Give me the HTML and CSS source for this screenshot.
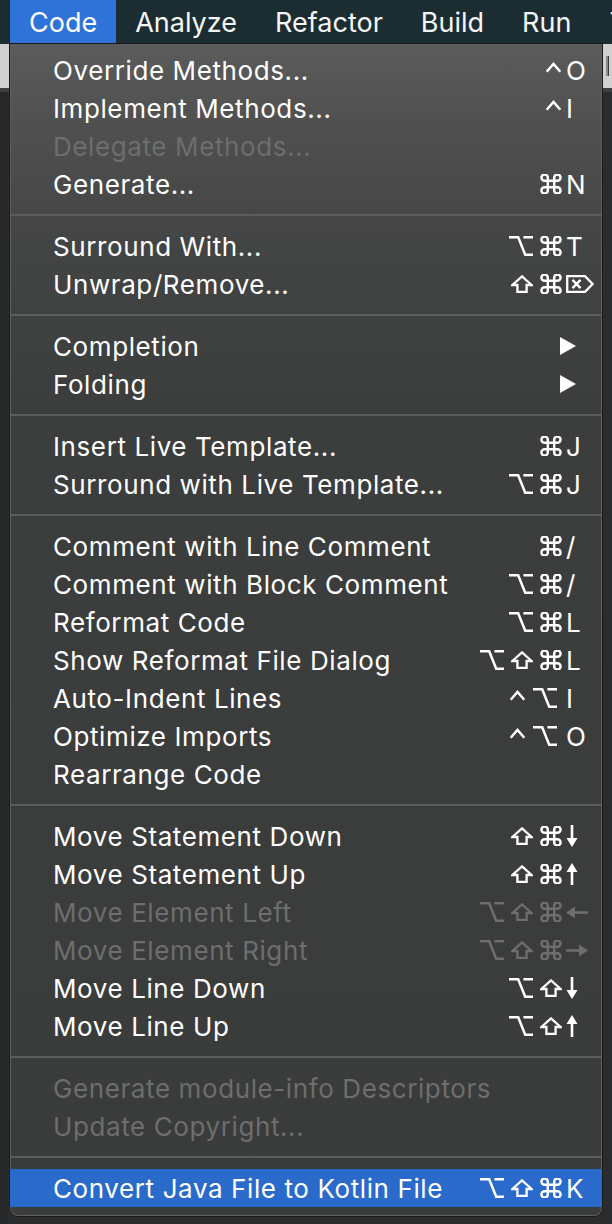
FILE: index.html
```html
<!DOCTYPE html>
<html>
<head>
<meta charset="utf-8">
<link rel="stylesheet" href="styles.css">
</head>
<body>
<svg class="defs" width="0" height="0" aria-hidden="true">
  <defs>
    <symbol id="cmd" viewBox="2.6 2.6 18.8 18.8"><path d="M15 6v12a3 3 0 1 0 3-3H6a3 3 0 1 0 3 3V6a3 3 0 1 0-3 3h12a3 3 0 1 0-3-3" fill="none" stroke="currentColor" stroke-width="2.3"/></symbol>
    <symbol id="opt" viewBox="0 0 24 20"><path d="M0 1.3H9.2L16.2 18.7H24M14.4 1.3H24" fill="none" stroke="currentColor" stroke-width="2.5"/></symbol>
    <symbol id="shift" viewBox="0 0 22 18"><path d="M11 1.4L20.6 10H15.6V16.8H6.4V10H1.4Z" fill="none" stroke="currentColor" stroke-width="2.3" stroke-linejoin="miter"/></symbol>
    <symbol id="ctrl" viewBox="0 0 16 20"><path d="M1.2 11.8L8 4L14.8 11.8" fill="none" stroke="currentColor" stroke-width="2.5"/></symbol>
    <symbol id="del" viewBox="0 0 28 18"><path d="M1.2 1.2H19L26.6 9L19 16.8H1.2Z" fill="none" stroke="currentColor" stroke-width="2.3"/><path d="M6.5 4.8L14.5 13.2M14.5 4.8L6.5 13.2" fill="none" stroke="currentColor" stroke-width="2.4"/></symbol>
    <symbol id="down" viewBox="0 0 12 22"><path d="M6 0V14" stroke="currentColor" stroke-width="2.6"/><path d="M0.5 13H11.5L6 22Z" fill="currentColor"/></symbol>
    <symbol id="up" viewBox="0 0 12 22"><path d="M6 22V8" stroke="currentColor" stroke-width="2.6"/><path d="M0.5 9H11.5L6 0Z" fill="currentColor"/></symbol>
    <symbol id="left" viewBox="0 0 22 13"><path d="M22 6.5H8" stroke="currentColor" stroke-width="2.6"/><path d="M0 6.5L9 0.5V12.5Z" fill="currentColor"/></symbol>
    <symbol id="right" viewBox="0 0 22 13"><path d="M0 6.5H14" stroke="currentColor" stroke-width="2.6"/><path d="M22 6.5L13 0.5V12.5Z" fill="currentColor"/></symbol>
    <symbol id="tri" viewBox="0 0 18 18"><path d="M1 0L17 9L1 18Z" fill="currentColor"/></symbol>
  </defs>
</svg>
<div class="screen">
  <div class="menubar">
    <span class="mb-item active">Code</span>
    <span class="mb-item">Analyze</span>
    <span class="mb-item">Refactor</span>
    <span class="mb-item">Build</span>
    <span class="mb-item">Run</span>
    <span class="mb-item">Tools</span>
  </div>
  <div class="editor">
    <div class="tabbar"><span class="tab-mark"></span></div>
    <div class="stripe"></div>
    <div class="workarea"></div>
  </div>

  <div class="menu">
    <div class="item"><span class="label">Override Methods...</span><span class="mods"><svg class="g-ctrl"><use href="#ctrl"/></svg></span><span class="key">O</span></div>
    <div class="item"><span class="label">Implement Methods...</span><span class="mods"><svg class="g-ctrl"><use href="#ctrl"/></svg></span><span class="key">I</span></div>
    <div class="item disabled"><span class="label">Delegate Methods...</span><span class="mods"></span><span class="key"></span></div>
    <div class="item"><span class="label">Generate...</span><span class="mods"><svg class="g-cmd"><use href="#cmd"/></svg></span><span class="key">N</span></div>
    <div class="sep"></div>
    <div class="item"><span class="label">Surround With...</span><span class="mods"><svg class="g-opt"><use href="#opt"/></svg><svg class="g-cmd"><use href="#cmd"/></svg></span><span class="key">T</span></div>
    <div class="item"><span class="label">Unwrap/Remove...</span><span class="mods"><svg class="g-shift"><use href="#shift"/></svg><svg class="g-cmd"><use href="#cmd"/></svg></span><span class="key"><svg class="g-del"><use href="#del"/></svg></span></div>
    <div class="sep"></div>
    <div class="item"><span class="label">Completion</span><span class="mods"></span><span class="key arrow"><svg class="g-tri"><use href="#tri"/></svg></span></div>
    <div class="item"><span class="label">Folding</span><span class="mods"></span><span class="key arrow"><svg class="g-tri"><use href="#tri"/></svg></span></div>
    <div class="sep"></div>
    <div class="item"><span class="label">Insert Live Template...</span><span class="mods"><svg class="g-cmd"><use href="#cmd"/></svg></span><span class="key">J</span></div>
    <div class="item"><span class="label">Surround with Live Template...</span><span class="mods"><svg class="g-opt"><use href="#opt"/></svg><svg class="g-cmd"><use href="#cmd"/></svg></span><span class="key">J</span></div>
    <div class="sep"></div>
    <div class="item"><span class="label">Comment with Line Comment</span><span class="mods"><svg class="g-cmd"><use href="#cmd"/></svg></span><span class="key">/</span></div>
    <div class="item"><span class="label">Comment with Block Comment</span><span class="mods"><svg class="g-opt"><use href="#opt"/></svg><svg class="g-cmd"><use href="#cmd"/></svg></span><span class="key">/</span></div>
    <div class="item"><span class="label">Reformat Code</span><span class="mods"><svg class="g-opt"><use href="#opt"/></svg><svg class="g-cmd"><use href="#cmd"/></svg></span><span class="key">L</span></div>
    <div class="item"><span class="label">Show Reformat File Dialog</span><span class="mods"><svg class="g-opt"><use href="#opt"/></svg><svg class="g-shift"><use href="#shift"/></svg><svg class="g-cmd"><use href="#cmd"/></svg></span><span class="key">L</span></div>
    <div class="item"><span class="label">Auto-Indent Lines</span><span class="mods"><svg class="g-ctrl"><use href="#ctrl"/></svg><svg class="g-opt last"><use href="#opt"/></svg></span><span class="key">I</span></div>
    <div class="item"><span class="label">Optimize Imports</span><span class="mods"><svg class="g-ctrl"><use href="#ctrl"/></svg><svg class="g-opt last"><use href="#opt"/></svg></span><span class="key">O</span></div>
    <div class="item"><span class="label">Rearrange Code</span><span class="mods"></span><span class="key"></span></div>
    <div class="sep"></div>
    <div class="item"><span class="label">Move Statement Down</span><span class="mods"><svg class="g-shift"><use href="#shift"/></svg><svg class="g-cmd"><use href="#cmd"/></svg></span><span class="key"><svg class="g-vert"><use href="#down"/></svg></span></div>
    <div class="item"><span class="label">Move Statement Up</span><span class="mods"><svg class="g-shift"><use href="#shift"/></svg><svg class="g-cmd"><use href="#cmd"/></svg></span><span class="key"><svg class="g-vert"><use href="#up"/></svg></span></div>
    <div class="item disabled"><span class="label">Move Element Left</span><span class="mods"><svg class="g-opt"><use href="#opt"/></svg><svg class="g-shift"><use href="#shift"/></svg><svg class="g-cmd"><use href="#cmd"/></svg></span><span class="key"><svg class="g-horz"><use href="#left"/></svg></span></div>
    <div class="item disabled"><span class="label">Move Element Right</span><span class="mods"><svg class="g-opt"><use href="#opt"/></svg><svg class="g-shift"><use href="#shift"/></svg><svg class="g-cmd"><use href="#cmd"/></svg></span><span class="key"><svg class="g-horz"><use href="#right"/></svg></span></div>
    <div class="item"><span class="label">Move Line Down</span><span class="mods"><svg class="g-opt"><use href="#opt"/></svg><svg class="g-shift"><use href="#shift"/></svg></span><span class="key"><svg class="g-vert"><use href="#down"/></svg></span></div>
    <div class="item"><span class="label">Move Line Up</span><span class="mods"><svg class="g-opt"><use href="#opt"/></svg><svg class="g-shift"><use href="#shift"/></svg></span><span class="key"><svg class="g-vert"><use href="#up"/></svg></span></div>
    <div class="sep"></div>
    <div class="item disabled"><span class="label">Generate module-info Descriptors</span><span class="mods"></span><span class="key"></span></div>
    <div class="item disabled"><span class="label">Update Copyright...</span><span class="mods"></span><span class="key"></span></div>
    <div class="sep"></div>
    <div class="item selected"><span class="label">Convert Java File to Kotlin File</span><span class="mods"><svg class="g-opt"><use href="#opt"/></svg><svg class="g-shift"><use href="#shift"/></svg><svg class="g-cmd"><use href="#cmd"/></svg></span><span class="key">K</span></div>
  </div>
</div>
</body>
</html>
```

FILE: styles.css
```css
* { box-sizing: border-box; }
html, body {
  margin: 0;
  padding: 0;
  width: 612px;
  height: 1224px;
  overflow: hidden;
  background: #2b2c2d;
}
.defs {
  position: absolute;
  width: 0;
  height: 0;
}
.screen {
  position: relative;
  width: 612px;
  height: 1224px;
  font-family: Inter, "Noto Sans", sans-serif;
  color: #fff;
}
.menubar {
  height: 44px;
  background: #1c2d32;
  display: flex;
  align-items: stretch;
  padding-left: 10px;
  overflow: hidden;
  white-space: nowrap;
}
.mb-item {
  display: flex;
  align-items: center;
  padding: 0 19px;
  font-size: 27px;
  letter-spacing: 0;
  color: #f4f6f6;
  padding-bottom: 0;
}
.mb-item.active {
  background: #2f72d8;
  color: #fff;
}
.editor {
  display: flex;
  flex-direction: column;
  height: 1180px;
}
.tabbar {
  height: 44px;
  background: #d0d0d0;
  display: flex;
  justify-content: flex-end;
  align-items: center;
  overflow: hidden;
  padding-right: 3px;
}
.tab-mark {
  width: 3px;
  height: 20px;
  background: #3a3a3a;
  border-left: 2px solid #8a8a8a;
}
.stripe {
  height: 4px;
  background: #3d3f40;
}
.workarea {
  flex: 1;
  background: #2b2c2d;
  border-left: 8px solid #262728;
}
.menu {
  position: absolute;
  top: 44px;
  left: 10px;
  width: 592px;
  height: 1172px;
  padding: 7px 0 8px;
  background: linear-gradient(180deg, #5a5b5a 0px, #4f504f 80px, #434444 200px, #3c3d3d 360px, #3a3b3b 100%);
  border: 1px solid #5e5f5f;
  border-top: none;
  border-radius: 0 0 8px 8px;
  box-shadow: 0 0 0 1px #1a1a1a;
  display: flex;
  flex-direction: column;
}
.item {
  height: 38px;
  display: flex;
  align-items: center;
  padding-left: 42px;
  padding-right: 6px;
  font-size: 26px;
  letter-spacing: 0.6px;
  white-space: nowrap;
  color: #fff;
}
.label {
  flex: 1;
}
.mods {
  display: flex;
  align-items: center;
  gap: 7px;
}
.mods svg { display: block; }
.g-cmd { width: 22px; height: 20px; }
.g-opt { width: 24px; height: 20px; }
.g-opt.last { margin-right: 5px; }
.g-shift { width: 22px; height: 18px; }
.g-ctrl { width: 17px; height: 20px; }
.g-del { width: 28px; height: 18px; display: block; }
.g-vert { width: 12px; height: 22px; display: block; }
.g-horz { width: 22px; height: 13px; display: block; }
.g-tri { width: 18px; height: 18px; display: block; }
.key {
  width: 29px;
  margin-left: 4px;
  display: flex;
  align-items: center;
  justify-content: flex-start;
  letter-spacing: 0;
}
.key.arrow {
  margin-left: -3px;
  width: 36px;
}
.disabled {
  color: #6d6e6d;
}
.selected {
  background: #2a6acb;
  margin: 0 -1px;
  padding-left: 43px;
  padding-right: 7px;
}
.sep {
  height: 24px;
  display: flex;
  align-items: center;
}
.sep::before {
  content: "";
  display: block;
  width: 100%;
  height: 2px;
  background: #5b5c5c;
}
```
